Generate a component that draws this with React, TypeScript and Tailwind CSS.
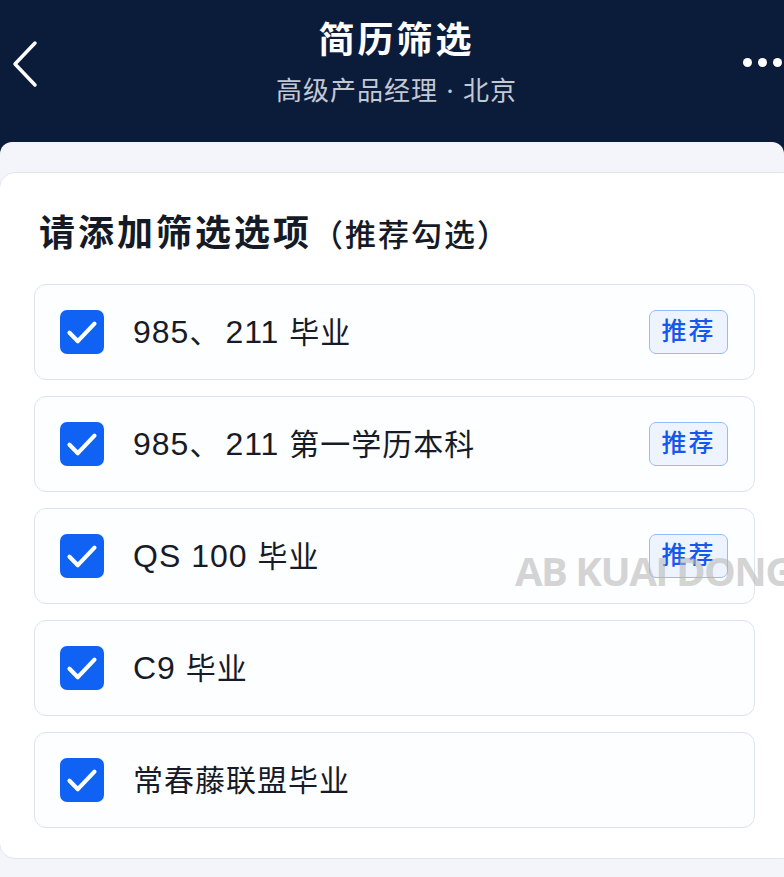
import React from "react";

const rows = [
  { label: "985、211 毕业", rec: true },
  { label: "985、211 第一学历本科", rec: true },
  { label: "QS 100 毕业", rec: true },
  { label: "C9 毕业", rec: false },
  { label: "常春藤联盟毕业", rec: false },
];

const font = { fontFamily: '"Inter", "Noto Sans CJK SC", sans-serif' };
const rowFont = { fontFamily: '"Liberation Sans", "Noto Sans CJK SC", sans-serif' };

function Label({ text }: { text: string }) {
  const parts = text.split(/([\x20-\x7E]+|、)/).filter((p) => p.length > 0);
  return (
    <>
      {parts.map((p, i) =>
        p === "、" ? (
          <span key={i} className="mr-[5px]">
            {p}
          </span>
        ) : /^[\x20-\x7E]+$/.test(p) ? (
          <span key={i} className="whitespace-pre text-[32px]">
            {p}
          </span>
        ) : (
          <span key={i}>{p}</span>
        )
      )}
    </>
  );
}

function Check() {
  return (
    <div className="flex h-[44px] w-[44px] shrink-0 items-center justify-center rounded-[7px] bg-[#0f62f4]">
      <svg width="40" height="40" viewBox="0 0 24 24" fill="none">
        <path d="M4.5 12.5l5 5L19.5 7" stroke="white" strokeWidth="2.5" strokeLinecap="round" strokeLinejoin="round" />
      </svg>
    </div>
  );
}

export default function App() {
  return (
    <div className="relative h-[877px] w-[784px] overflow-hidden bg-[#0b1c3b]" style={font}>
      <div className="relative flex h-[142px] flex-col items-center pl-[9px] pt-[15px]">
        <svg className="absolute left-[10px] top-[40px]" width="30" height="48" viewBox="0 0 30 48" fill="none">
          <path d="M25 3L5 24l20 21" stroke="white" strokeWidth="3.5" strokeLinecap="round" strokeLinejoin="round" />
        </svg>
        <div className="absolute right-[2px] top-[58px] flex gap-[6px]">
          <span className="h-[9px] w-[9px] rounded-full bg-white" />
          <span className="h-[9px] w-[9px] rounded-full bg-white" />
          <span className="h-[9px] w-[9px] rounded-full bg-white" />
        </div>
        <div className="text-[36px] font-bold leading-[50px] tracking-[3px] text-white">简历筛选</div>
        <div className="mt-[8px] text-[26px] leading-[36px] tracking-[1px] text-[#c3c9d4]">高级产品经理 · 北京</div>
      </div>
      <div className="h-[735px] rounded-t-[12px] bg-[#f3f5fa] pt-[30px]">
        <div className="ml-[-1px] w-[800px] rounded-[16px] border border-[#dfe5ef] bg-white pb-[30px] pt-[40px]">
          <div className="mb-[29px] flex items-baseline pl-[39px] leading-[40px] text-[#141a26]">
            <span className="text-[36px] font-bold tracking-[3px]">请添加筛选选项</span>
            <span className="text-[31px] font-medium tracking-[2px]">（推荐勾选）</span>
          </div>
          <div className="flex flex-col gap-[16px] pl-[34px]">
            {rows.map((r) => (
              <div
                key={r.label}
                className="flex h-[96px] w-[721px] items-center rounded-[12px] border border-[#dde4f0] bg-[#fdfeff] pl-[25px] pr-[26px]"
              >
                <Check />
                <div className="ml-[29px] flex-1 text-[30px] tracking-[1px] text-[#161b27]" style={rowFont}>
                  <Label text={r.label} />
                </div>
                {r.rec && (
                  <div className="flex h-[44px] w-[79px] items-center justify-center rounded-[7px] border border-[#99b9f7] bg-[#eef4ff] text-[25px] font-medium tracking-[2px] text-[#1558ee]">
                    推荐
                  </div>
                )}
              </div>
            ))}
          </div>
        </div>
      </div>
      <div
        className="pointer-events-none absolute left-[515px] top-[551px] whitespace-nowrap text-[40px] font-bold leading-none tracking-[-1.5px] text-[#b8b8b8]/60"
        style={{ fontFamily: '"Open Sans", sans-serif' }}
      >
        AB KUAI DONG
      </div>
    </div>
  );
}
